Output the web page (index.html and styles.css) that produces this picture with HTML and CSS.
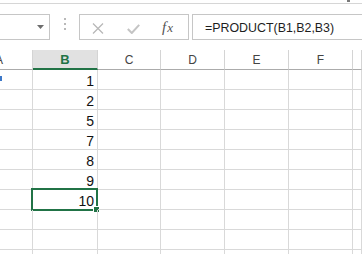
FILE: index.html
```html
<!DOCTYPE html>
<html lang="en">
<head>
  <meta charset="UTF-8">
  <title>Sheet</title>
  <link rel="stylesheet" href="styles.css">
</head>
<body>
  <div class="top-strip"><span class="ribbon-tick"></span></div>

  <div class="formula-bar">
    <div class="name-box">
      <svg class="drop" width="7" height="4" viewBox="0 0 7 4"><path d="M0 0h7L3.5 4z" fill="#6d6d6d"/></svg>
    </div>
    <div class="grip"><span></span><span></span><span></span></div>
    <div class="fx-buttons">
      <svg class="ico-cancel" width="12" height="11" viewBox="0 0 12 11"><path d="M1 0.5l10 10M11 0.5l-10 10" stroke="#b8b8b8" stroke-width="1.3" fill="none"/></svg>
      <svg class="ico-enter" width="13" height="10" viewBox="0 0 13 10"><path d="M0.8 5l4 4L12.2 0.8" stroke="#c4c4c4" stroke-width="2" fill="none"/></svg>
      <span class="fx">f<span>x</span></span>
    </div>
    <div class="formula-input">=PRODUCT(B1,B2,B3)</div>
  </div>

  <div class="sheet">
    <div class="row head">
      <div class="cell col-a"><span>A</span></div>
      <div class="cell active">B</div>
      <div class="cell">C</div>
      <div class="cell">D</div>
      <div class="cell">E</div>
      <div class="cell">F</div>
      <div class="cell"></div>
    </div>
    <div class="row">
      <div class="cell"><span class="link-tail"></span></div>
      <div class="cell num">1</div><div class="cell"></div><div class="cell"></div><div class="cell"></div><div class="cell"></div><div class="cell"></div>
    </div>
    <div class="row">
      <div class="cell"></div><div class="cell num">2</div><div class="cell"></div><div class="cell"></div><div class="cell"></div><div class="cell"></div><div class="cell"></div>
    </div>
    <div class="row">
      <div class="cell"></div><div class="cell num">5</div><div class="cell"></div><div class="cell"></div><div class="cell"></div><div class="cell"></div><div class="cell"></div>
    </div>
    <div class="row">
      <div class="cell"></div><div class="cell num">7</div><div class="cell"></div><div class="cell"></div><div class="cell"></div><div class="cell"></div><div class="cell"></div>
    </div>
    <div class="row">
      <div class="cell"></div><div class="cell num">8</div><div class="cell"></div><div class="cell"></div><div class="cell"></div><div class="cell"></div><div class="cell"></div>
    </div>
    <div class="row">
      <div class="cell"></div><div class="cell num">9</div><div class="cell"></div><div class="cell"></div><div class="cell"></div><div class="cell"></div><div class="cell"></div>
    </div>
    <div class="row">
      <div class="cell"></div>
      <div class="cell num selected">10<span class="sel-frame"><span class="fill-handle"></span></span></div>
      <div class="cell"></div><div class="cell"></div><div class="cell"></div><div class="cell"></div><div class="cell"></div>
    </div>
    <div class="row">
      <div class="cell"></div><div class="cell"></div><div class="cell"></div><div class="cell"></div><div class="cell"></div><div class="cell"></div><div class="cell"></div>
    </div>
    <div class="row">
      <div class="cell"></div><div class="cell"></div><div class="cell"></div><div class="cell"></div><div class="cell"></div><div class="cell"></div><div class="cell"></div>
    </div>
    <div class="row">
      <div class="cell"></div><div class="cell"></div><div class="cell"></div><div class="cell"></div><div class="cell"></div><div class="cell"></div><div class="cell"></div>
    </div>
  </div>
</body>
</html>
```

FILE: styles.css
```css
/* base */
* {
  margin: 0;
  padding: 0;
  box-sizing: border-box;
}
body {
  background: #fff;
  font-family: 'Liberation Sans', Arial, sans-serif;
  color: #222;
  overflow: hidden;
}

/* top strip */
.top-strip {
  height: 4px;
  border-bottom: 1px solid #d6d6d6;
  display: flex;
  justify-content: flex-end;
}
.ribbon-tick {
  width: 3px;
  height: 2px;
  margin-right: 12px;
  background: #7a7a7a;
}

/* formula bar */
.formula-bar {
  display: flex;
  height: 26px;
  margin-top: 10px;
}
.name-box {
  width: 51px;
  margin-left: -1px;
  border: 1px solid #c6c6c6;
  display: flex;
  align-items: center;
  justify-content: flex-end;
  padding-right: 5px;
}
.grip {
  width: 29px;
  display: flex;
  flex-direction: column;
  align-items: center;
  gap: 3px;
  padding-top: 4px;
}
.grip span {
  width: 2px;
  height: 2px;
  background: #b9b9b9;
}
.fx-buttons {
  width: 110px;
  border: 1px solid #c6c6c6;
  display: flex;
  align-items: center;
  padding-left: 12px;
}
.ico-cancel {
  margin-top: 2px;
}
.ico-enter {
  margin-left: 23px;
  margin-top: 3px;
}
.fx {
  margin-left: 22px;
  font-family: 'Liberation Serif', 'Times New Roman', serif;
  font-style: italic;
  font-size: 15px;
  color: #555;
  letter-spacing: 1px;
}
.fx span {
  font-size: 13px;
}
.formula-input {
  flex: 1;
  margin-left: 3px;
  margin-right: -1px;
  border: 1px solid #c6c6c6;
  padding-left: 12px;
  padding-top: 2px;
  font-size: 12.4px;
  line-height: 22px;
  color: #1e1e1e;
}

/* grid */
.sheet {
  margin-top: 10px;
}
.row {
  display: grid;
  grid-template-columns: 33px 65px 63px 64px 64px 64px 1fr;
  height: 20px;
}
.cell {
  position: relative;
  border-right: 1px solid #d9d9d9;
  border-bottom: 1px solid #d9d9d9;
  height: 20px;
}
.head .cell {
  border-bottom-color: #ababab;
  border-right-color: #d4d4d4;
  text-align: center;
  font-size: 12px;
  line-height: 20px;
  color: #444;
}
.head .col-a {
  overflow: hidden;
  text-align: left;
}
.head .col-a span {
  margin-left: -5px;
}
.head .active {
  background: #e1e1e1;
  border-bottom: 2px solid #217346;
  color: #217346;
  font-weight: bold;
  font-size: 13px;
}
.num {
  text-align: right;
  padding-right: 3px;
  padding-top: 3px;
  font-family: 'Liberation Sans Narrow', 'Liberation Sans', Arial, sans-serif;
  font-size: 14px;
  line-height: 16px;
  color: #111;
}
.link-tail {
  display: block;
  width: 2px;
  height: 5px;
  margin-top: 6px;
  background: #3c78c8;
}

/* selection */
.sel-frame {
  position: absolute;
  left: -2px;
  top: -2px;
  width: 67px;
  height: 23px;
  border: 2px solid #217346;
}
.fill-handle {
  position: absolute;
  right: -4px;
  bottom: -4px;
  width: 7px;
  height: 7px;
  background: #217346;
  border: 1px solid #fff;
}
```
